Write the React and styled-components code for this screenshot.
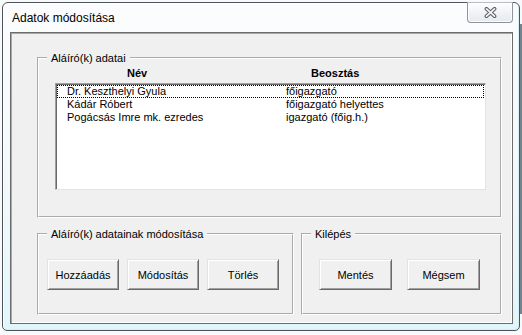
import React from "react";
import styled, { createGlobalStyle } from "styled-components";

const Global = createGlobalStyle`
  html, body {
    margin: 0;
    padding: 0;
  }
  body {
    width: 522px;
    height: 335px;
    overflow: hidden;
    background:
      linear-gradient(#75838f, #75838f) no-repeat right 0 top 24px / 3px 290px,
      #f7f9fa;
    font-family: "Liberation Sans", Arial, sans-serif;
    font-size: 11px;
    color: #000;
  }
`;

const Window = styled.div`
  box-sizing: border-box;
  margin: 2px 0 0 2px;
  width: 518px;
  height: 329px;
  border: 1px solid #4e545a;
  border-radius: 6px 6px 5px 5px;
  background: linear-gradient(#fbfcfd 0%, #f3f9fb 55%, #e0f6fb 100%);
  box-shadow: inset 1px 1px 0 #ffffff, inset -1px -1px 0 #d6eef5;
  display: flex;
  flex-direction: column;
`;

const TitleBar = styled.div`
  height: 29px;
  display: flex;
  align-items: center;
  padding-left: 9px;
  flex-shrink: 0;
`;

const Title = styled.span`
  font-family: "Liberation Sans", Arial, sans-serif;
  font-size: 12px;
  color: #000;
  line-height: 14px;
`;

const CloseButton = styled.div`
  box-sizing: border-box;
  align-self: flex-start;
  margin: -1px 6px 0 auto;
  width: 46px;
  height: 21px;
  border: 1px solid #8d949c;
  border-top-color: #b7bdc3;
  border-radius: 0 0 4px 4px;
  background: linear-gradient(#fdfdfe, #eef1f4 60%, #e6eaee);
  box-shadow: inset 0 0 0 1px rgba(255, 255, 255, 0.85);
  display: flex;
  align-items: center;
  justify-content: center;
`;

const Client = styled.div`
  box-sizing: border-box;
  margin-left: 7px;
  width: 503px;
  height: 292px;
  border: 1px solid #6c6c6c;
  box-shadow: inset 1px 1px 0 #a8a8a8, inset -1px -1px 0 #ffffff;
  background: #f0f0f0;
  padding: 18px 10px 0 26px;
  display: flex;
  flex-direction: column;
`;

const Group = styled.fieldset`
  box-sizing: border-box;
  margin: 0;
  padding: 0;
  min-width: 0;
  border: 2px groove #ffffff;
  width: ${(p) => p.$w}px;
`;

const Legend = styled.legend`
  margin-left: 8px;
  padding: 0 4px;
  font-size: 11px;
  line-height: 14px;
  color: #000;
`;

const ListBody = styled.div`
  padding: 2px 14px 26px 16px;
`;

const HeaderRow = styled.div`
  display: grid;
  grid-template-columns: 184px 1fr;
  padding-left: 72px;
  font-weight: bold;
  font-size: 11px;
  line-height: 13px;
`;

const ListBox = styled.div`
  box-sizing: border-box;
  margin-top: 3px;
  height: 107px;
  background: #fff;
  border: 1px solid;
  border-color: #a0a0a0 #e3e3e3 #e3e3e3 #a0a0a0;
  box-shadow: inset 1px 1px 0 #696969;
  padding: 1px 1px 0 1px;
`;

const Row = styled.div`
  display: grid;
  grid-template-columns: 219px 1fr;
  height: 13px;
  line-height: 13px;
  padding-left: 10px;
  white-space: nowrap;
  outline: ${(p) => (p.$focus ? "1px dotted #000" : "none")};
  outline-offset: -1px;
`;

const BottomRow = styled.div`
  display: flex;
  gap: 7px;
  margin-top: 9px;
`;

const ButtonBody = styled.div`
  display: flex;
  gap: ${(p) => p.$gap}px;
  padding: 18px 0 23px ${(p) => p.$pad}px;
`;

const Button = styled.button`
  box-sizing: border-box;
  width: ${(p) => p.$w}px;
  height: 31px;
  padding: 0;
  margin: 0;
  font-family: "Liberation Sans", Arial, sans-serif;
  font-size: 11px;
  color: #000;
  background: #f0f0f0;
  border: 1px solid;
  border-color: #e3e3e3 #696969 #696969 #e3e3e3;
  box-shadow: inset 1px 1px 0 #ffffff, inset -1px -1px 0 #a0a0a0;
  border-radius: 0;
`;

const signers = [
  ["Dr. Keszthelyi Gyula", "főigazgató"],
  ["Kádár Róbert", "főigazgató helyettes"],
  ["Pogácsás Imre mk. ezredes", "igazgató (főig.h.)"],
];

export default function App() {
  return (
    <>
      <Global />
      <Window>
        <TitleBar>
          <Title>Adatok módosítása</Title>
          <CloseButton>
            <svg width="13" height="11" viewBox="0 0 13 11">
              <path
                d="M2.5 1.8 L10.5 9.2 M10.5 1.8 L2.5 9.2"
                stroke="#5b5f64"
                strokeWidth="3.8"
                strokeLinecap="round"
                fill="none"
              />
              <path
                d="M2.5 1.8 L10.5 9.2 M10.5 1.8 L2.5 9.2"
                stroke="#f4f5f6"
                strokeWidth="1.7"
                strokeLinecap="round"
                fill="none"
              />
            </svg>
          </CloseButton>
        </TitleBar>
        <Client>
          <Group $w={465}>
            <Legend>Aláíró(k) adatai</Legend>
            <ListBody>
              <HeaderRow>
                <span>Név</span>
                <span>Beosztás</span>
              </HeaderRow>
              <ListBox>
                {signers.map(([name, role], i) => (
                  <Row key={name} $focus={i === 0}>
                    <span>{name}</span>
                    <span>{role}</span>
                  </Row>
                ))}
              </ListBox>
            </ListBody>
          </Group>
          <BottomRow>
            <Group $w={257}>
              <Legend>Aláíró(k) adatainak módosítása</Legend>
              <ButtonBody $gap={8} $pad={8}>
                <Button $w={72}>Hozzáadás</Button>
                <Button $w={72}>Módosítás</Button>
                <Button $w={72}>Törlés</Button>
              </ButtonBody>
            </Group>
            <Group $w={201}>
              <Legend>Kilépés</Legend>
              <ButtonBody $gap={15} $pad={16}>
                <Button $w={73}>Mentés</Button>
                <Button $w={73}>Mégsem</Button>
              </ButtonBody>
            </Group>
          </BottomRow>
        </Client>
      </Window>
    </>
  );
}
